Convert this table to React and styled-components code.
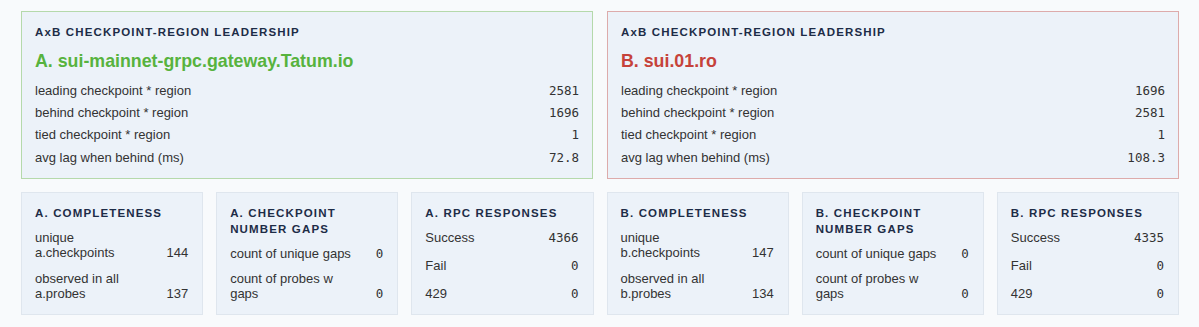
import React from "react";
import styled, { createGlobalStyle } from "styled-components";

const GlobalStyle = createGlobalStyle`
  html, body {
    margin: 0;
    padding: 0;
    background: #f8fafc;
  }
  body {
    font-family: "Liberation Sans", Arial, sans-serif;
    color: #333;
  }
`;

const leaders = [
  {
    key: "a",
    name: "A. sui-mainnet-grpc.gateway.Tatum.io",
    tone: "green",
    rows: [
      ["leading checkpoint * region", "2581"],
      ["behind checkpoint * region", "1696"],
      ["tied checkpoint * region", "1"],
      ["avg lag when behind (ms)", "72.8"],
    ],
  },
  {
    key: "b",
    name: "B. sui.01.ro",
    tone: "red",
    rows: [
      ["leading checkpoint * region", "1696"],
      ["behind checkpoint * region", "2581"],
      ["tied checkpoint * region", "1"],
      ["avg lag when behind (ms)", "108.3"],
    ],
  },
];

const stats = [
  {
    title: "A. COMPLETENESS",
    mono: false,
    rows: [
      ["unique a.checkpoints", "144"],
      ["observed in all a.probes", "137"],
    ],
  },
  {
    title: "A. CHECKPOINT NUMBER GAPS",
    mono: true,
    rows: [
      ["count of unique gaps", "0"],
      ["count of probes w gaps", "0"],
    ],
  },
  {
    title: "A. RPC RESPONSES",
    mono: true,
    rows: [
      ["Success", "4366"],
      ["Fail", "0"],
      ["429", "0"],
    ],
  },
  {
    title: "B. COMPLETENESS",
    mono: false,
    rows: [
      ["unique b.checkpoints", "147"],
      ["observed in all b.probes", "134"],
    ],
  },
  {
    title: "B. CHECKPOINT NUMBER GAPS",
    mono: true,
    rows: [
      ["count of unique gaps", "0"],
      ["count of probes w gaps", "0"],
    ],
  },
  {
    title: "B. RPC RESPONSES",
    mono: true,
    rows: [
      ["Success", "4335"],
      ["Fail", "0"],
      ["429", "0"],
    ],
  },
];

const tones = {
  green: { border: "#b5d9ab", text: "#57b33e" },
  red: { border: "#ddabab", text: "#c6423a" },
};

const App = () => {
  return (
    <>
      <GlobalStyle />
      <Page>
        <LeaderGrid>
          {leaders.map((l) => (
            <LeaderCard key={l.key} $tone={l.tone}>
              <CardHeading>AxB CHECKPOINT-REGION LEADERSHIP</CardHeading>
              <LeaderName $tone={l.tone}>{l.name}</LeaderName>
              {l.rows.map(([label, value]) => (
                <LeaderRow key={label}>
                  <span>{label}</span>
                  <MonoValue>{value}</MonoValue>
                </LeaderRow>
              ))}
            </LeaderCard>
          ))}
        </LeaderGrid>

        <StatGrid>
          {stats.map((s) => (
            <StatCard key={s.title}>
              <CardHeading>{s.title}</CardHeading>
              <StatBody>
                {s.rows.map(([label, value]) => (
                  <StatRow key={label}>
                    <span>{label}</span>
                    <StatValue $mono={s.mono}>{value}</StatValue>
                  </StatRow>
                ))}
              </StatBody>
            </StatCard>
          ))}
        </StatGrid>
      </Page>
    </>
  );
};

// Styled Components

const Page = styled.div`
  padding: 11px 20px 12px 21px;
  display: flex;
  flex-direction: column;
  gap: 13px;
`;

const LeaderGrid = styled.div`
  display: grid;
  grid-template-columns: 1fr 1fr;
  gap: 14px;
`;

const LeaderCard = styled.div`
  background: #ecf2f9;
  border: 1px solid ${(p) => tones[p.$tone].border};
  padding: 12px 13px 10px;
`;

const CardHeading = styled.div`
  font-size: 11.5px;
  line-height: 16px;
  font-weight: 700;
  letter-spacing: 0.1em;
  color: #1d2c47;
`;

const LeaderName = styled.div`
  margin: 10px 0 7px;
  font-size: 17.8px;
  line-height: 22px;
  font-weight: 700;
  color: ${(p) => tones[p.$tone].text};
`;

const LeaderRow = styled.div`
  display: flex;
  justify-content: space-between;
  align-items: center;
  height: 22.3px;
  font-size: 13px;
  color: #333;
`;

const MonoValue = styled.span`
  font-family: "DejaVu Sans Mono", "Liberation Mono", monospace;
  font-size: 12.5px;
  color: #333;
`;

const StatGrid = styled.div`
  display: grid;
  grid-template-columns: repeat(6, 1fr);
  gap: 13px;
`;

const StatCard = styled.div`
  background: #ecf2f9;
  border: 1px solid #dfe6ee;
  padding: 12px 14px 13px 13px;
  display: flex;
  flex-direction: column;
  gap: 9px;
`;

const StatBody = styled.div`
  flex: 1;
  display: flex;
  flex-direction: column;
  justify-content: space-between;
  gap: 10px;
`;

const StatRow = styled.div`
  display: grid;
  grid-template-columns: 1fr auto;
  column-gap: 20px;
  align-items: end;
  font-size: 13px;
  line-height: 15px;
  color: #333;
`;

const StatValue = styled.span`
  text-align: right;
  font-family: ${(p) =>
    p.$mono
      ? `"DejaVu Sans Mono", "Liberation Mono", monospace`
      : `"Liberation Sans", Arial, sans-serif`};
  font-size: ${(p) => (p.$mono ? "12.5px" : "13px")};
`;

export default App;
